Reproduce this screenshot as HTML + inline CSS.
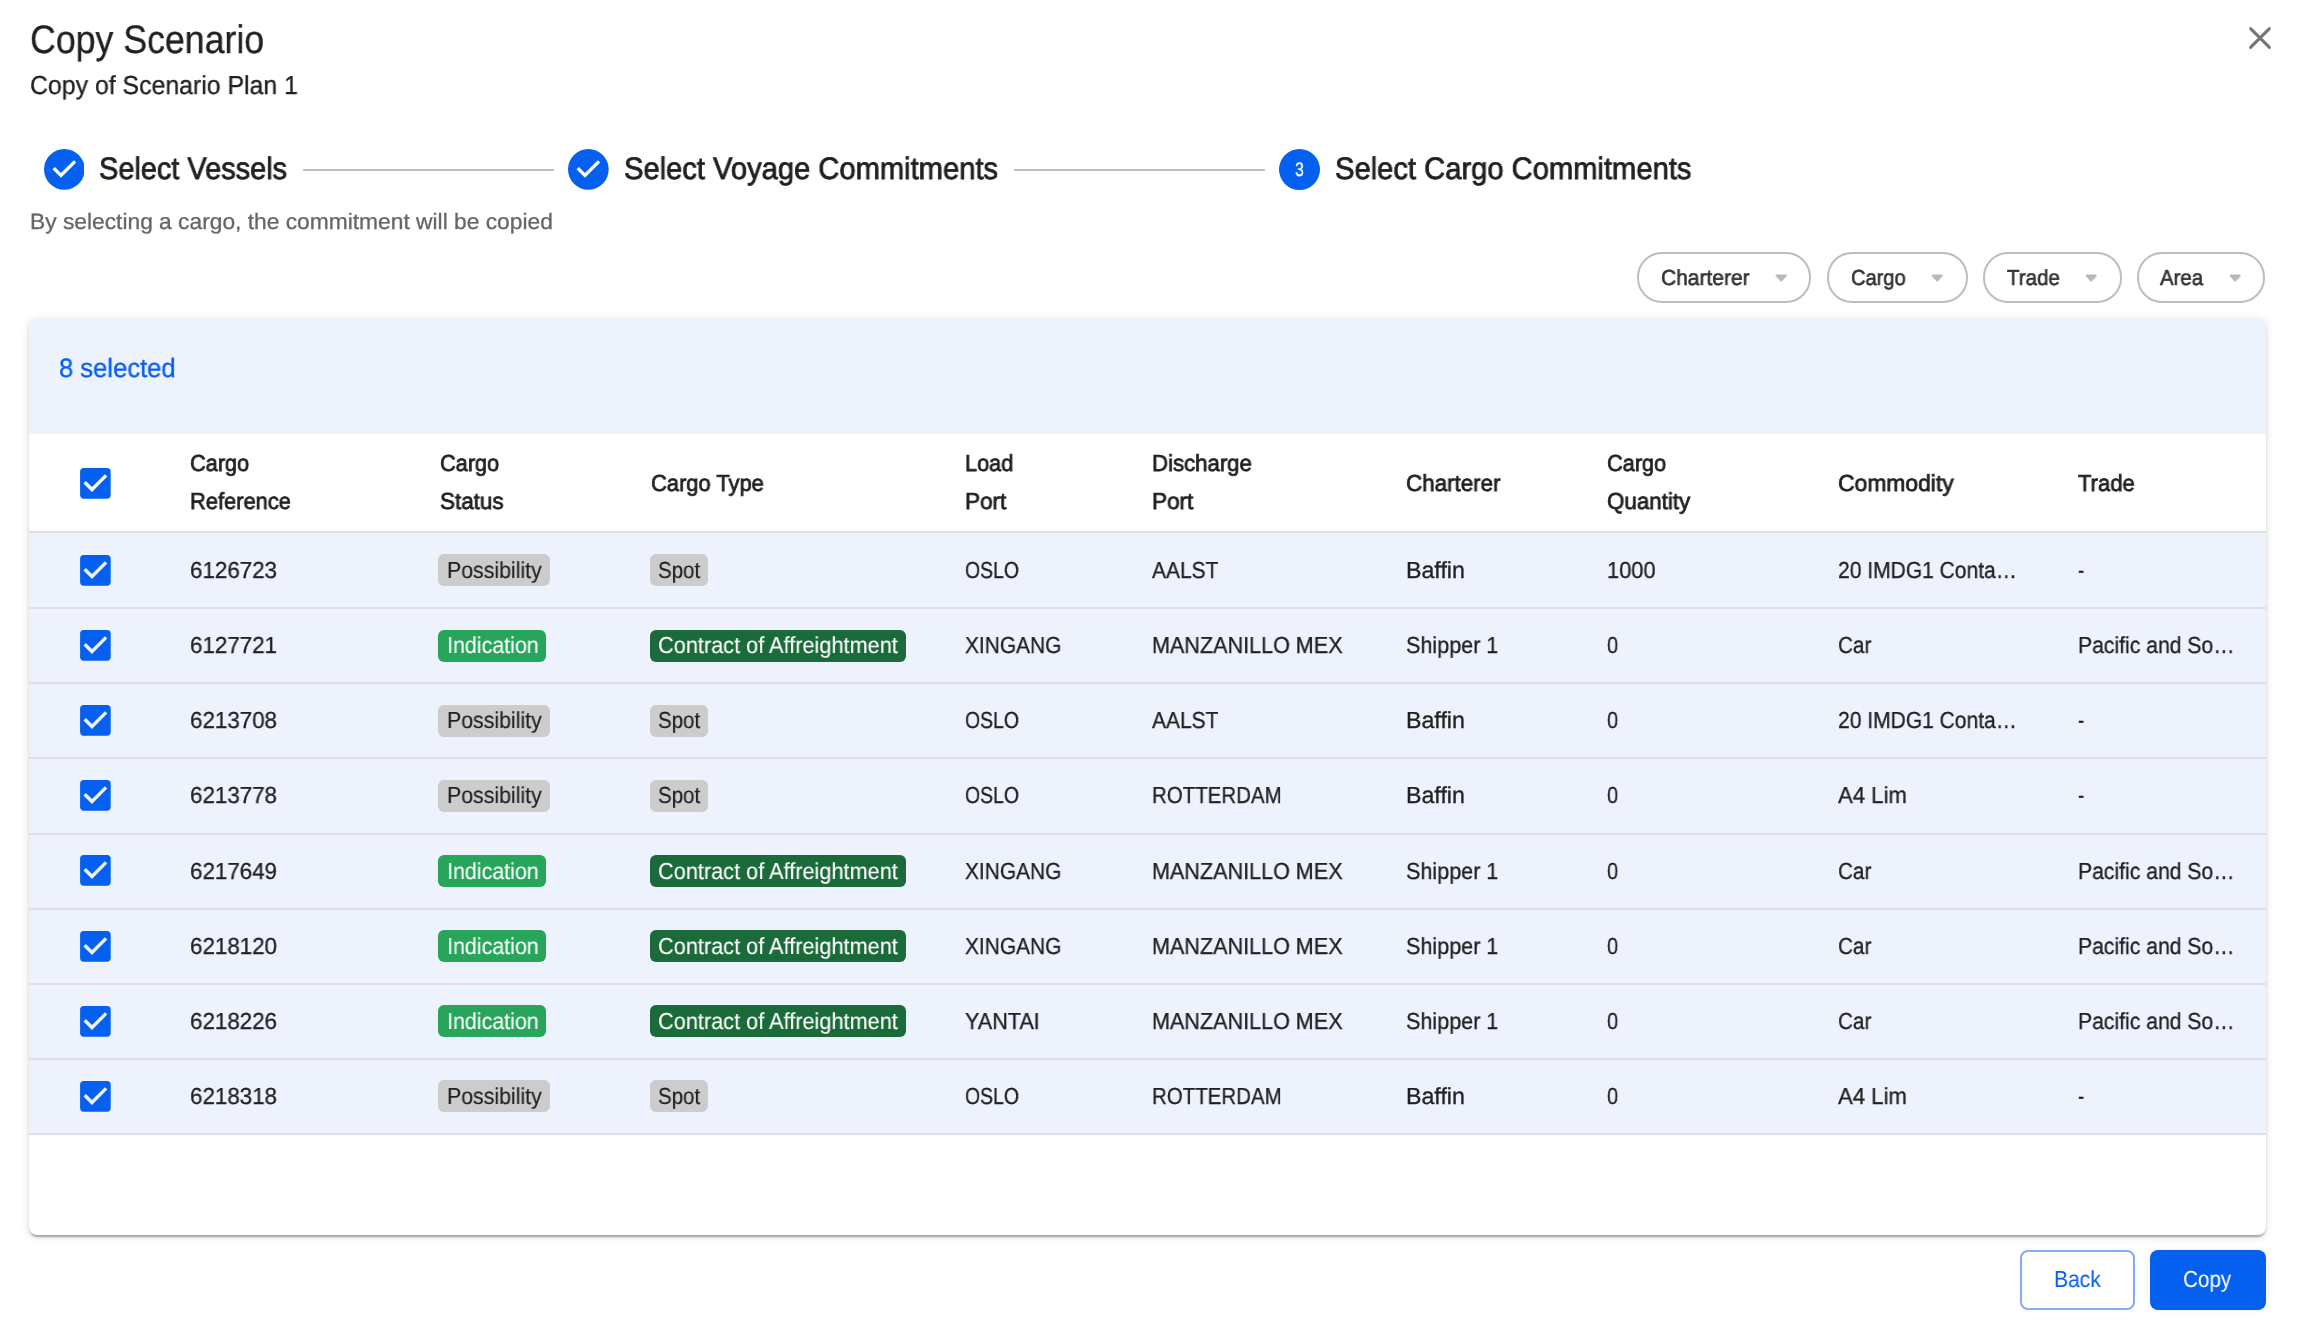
<!DOCTYPE html>
<html><head><meta charset="utf-8"><title>Copy Scenario</title>
<style>
html,body{margin:0;padding:0;background:#fff;width:2304px;height:1332px;overflow:hidden;position:relative}
body{font-family:"Liberation Sans",sans-serif;text-rendering:geometricPrecision}
.t{position:absolute;white-space:nowrap;line-height:1;transform-origin:0 0;will-change:transform}
</style></head><body>
<div class="t" style="left:29.80px;top:21px;font-size:39.70px;color:#212121;-webkit-text-stroke:0.30px #212121;transform:scaleX(0.8993);">Copy Scenario</div>
<div class="t" style="left:30.40px;top:72px;font-size:26.00px;color:#212121;-webkit-text-stroke:0.30px #212121;transform:scaleX(0.9554);">Copy of Scenario Plan 1</div>
<svg style="position:absolute;left:2244px;top:22.3px" width="32" height="32" viewBox="0 0 32 32"><path d="M6.6 6.6L25.4 25.4M25.4 6.6L6.6 25.4" stroke="#757575" stroke-width="3" stroke-linecap="round"/></svg>
<svg style="position:absolute;left:43.70px;top:148.90px" width="40.7" height="40.7" viewBox="0 0 24 24"><path fill="#0560f0" d="M12 0a12 12 0 1 0 0 24 12 12 0 0 0 0-24zm-2 17l-5-5 1.4-1.4 3.6 3.6 7.6-7.6L19 8l-9 9z"/></svg>
<svg style="position:absolute;left:568.25px;top:148.90px" width="40.7" height="40.7" viewBox="0 0 24 24"><path fill="#0560f0" d="M12 0a12 12 0 1 0 0 24 12 12 0 0 0 0-24zm-2 17l-5-5 1.4-1.4 3.6 3.6 7.6-7.6L19 8l-9 9z"/></svg>
<div style="position:absolute;left:1278.95px;top:148.75px;width:41.1px;height:41.1px;border-radius:50%;background:#0560f0"></div>
<div class="t" style="left:1295.10px;top:161px;font-size:19.50px;color:#fff;-webkit-text-stroke:0.30px #fff;transform:scaleX(0.8186);">3</div>
<div class="t" style="left:99.20px;top:153px;font-size:31.00px;color:#212121;-webkit-text-stroke:0.80px #212121;transform:scaleX(0.9330);">Select Vessels</div>
<div class="t" style="left:623.70px;top:153px;font-size:31.00px;color:#212121;-webkit-text-stroke:0.80px #212121;transform:scaleX(0.9397);">Select Voyage Commitments</div>
<div class="t" style="left:1334.50px;top:153px;font-size:31.00px;color:#212121;-webkit-text-stroke:0.80px #212121;transform:scaleX(0.9404);">Select Cargo Commitments</div>
<div style="position:absolute;left:303px;top:169px;width:251px;height:2px;background:#bdbdbd"></div>
<div style="position:absolute;left:1014px;top:169px;width:251px;height:2px;background:#bdbdbd"></div>
<div class="t" style="left:29.60px;top:211px;font-size:22.20px;color:#666666;-webkit-text-stroke:0.30px #666666;transform:scaleX(1.0265);">By selecting a cargo, the commitment will be copied</div>
<div style="position:absolute;left:1637px;top:252px;width:174px;height:51px;box-sizing:border-box;border:2px solid #bdbdbd;border-radius:25px"></div>
<div class="t" style="left:1661.40px;top:267px;font-size:21.80px;color:#333333;-webkit-text-stroke:0.60px #333333;transform:scaleX(0.9624);">Charterer</div>
<svg style="position:absolute;left:1774.6px;top:274.4px" width="13" height="9" viewBox="0 0 13 9"><path d="M1.6 1.5H10.8L6.2 6.6Z" fill="#b9b9b9" stroke="#b9b9b9" stroke-linejoin="round" stroke-width="2"/></svg>
<div style="position:absolute;left:1827px;top:252px;width:141px;height:51px;box-sizing:border-box;border:2px solid #bdbdbd;border-radius:25px"></div>
<div class="t" style="left:1851.00px;top:267px;font-size:21.80px;color:#333333;-webkit-text-stroke:0.60px #333333;transform:scaleX(0.9215);">Cargo</div>
<svg style="position:absolute;left:1930.9px;top:274.4px" width="13" height="9" viewBox="0 0 13 9"><path d="M1.6 1.5H10.8L6.2 6.6Z" fill="#b9b9b9" stroke="#b9b9b9" stroke-linejoin="round" stroke-width="2"/></svg>
<div style="position:absolute;left:1983px;top:252px;width:139px;height:51px;box-sizing:border-box;border:2px solid #bdbdbd;border-radius:25px"></div>
<div class="t" style="left:2007.00px;top:267px;font-size:21.80px;color:#333333;-webkit-text-stroke:0.60px #333333;transform:scaleX(0.9411);">Trade</div>
<svg style="position:absolute;left:2085.3px;top:274.4px" width="13" height="9" viewBox="0 0 13 9"><path d="M1.6 1.5H10.8L6.2 6.6Z" fill="#b9b9b9" stroke="#b9b9b9" stroke-linejoin="round" stroke-width="2"/></svg>
<div style="position:absolute;left:2137px;top:252px;width:128px;height:51px;box-sizing:border-box;border:2px solid #bdbdbd;border-radius:25px"></div>
<div class="t" style="left:2160.40px;top:267px;font-size:21.80px;color:#333333;-webkit-text-stroke:0.60px #333333;transform:scaleX(0.9348);">Area</div>
<svg style="position:absolute;left:2228.6px;top:274.4px" width="13" height="9" viewBox="0 0 13 9"><path d="M1.6 1.5H10.8L6.2 6.6Z" fill="#b9b9b9" stroke="#b9b9b9" stroke-linejoin="round" stroke-width="2"/></svg>
<div style="position:absolute;left:29px;top:318px;width:2237px;height:917px;border-radius:8px;background:#fff;box-shadow:0 4px 2px -2px rgba(0,0,0,0.2),0 2px 2px 0 rgba(0,0,0,0.14),0 2px 8px 0 rgba(0,0,0,0.13);overflow:hidden"><div style="position:absolute;left:0;top:0;width:100%;height:115.6px;background:#edf2fd"></div><div style="position:absolute;left:0;top:215px;width:100%;height:602px;background:#edf2fd"></div></div>
<div class="t" style="left:59.20px;top:355px;font-size:26.50px;color:#0560f0;-webkit-text-stroke:0.30px #0560f0;transform:scaleX(0.9656);">8 selected</div>
<div style="position:absolute;left:29px;top:531.4px;width:2237px;height:2px;background:#e0e0e0"></div>
<div style="position:absolute;left:29px;top:607.2px;width:2237px;height:2px;background:#e0e0e0"></div>
<div style="position:absolute;left:29px;top:682.3px;width:2237px;height:2px;background:#e0e0e0"></div>
<div style="position:absolute;left:29px;top:757.4px;width:2237px;height:2px;background:#e0e0e0"></div>
<div style="position:absolute;left:29px;top:832.5px;width:2237px;height:2px;background:#e0e0e0"></div>
<div style="position:absolute;left:29px;top:907.6px;width:2237px;height:2px;background:#e0e0e0"></div>
<div style="position:absolute;left:29px;top:982.7px;width:2237px;height:2px;background:#e0e0e0"></div>
<div style="position:absolute;left:29px;top:1057.8px;width:2237px;height:2px;background:#e0e0e0"></div>
<div style="position:absolute;left:29px;top:1132.9px;width:2237px;height:2px;background:#e0e0e0"></div>
<svg style="position:absolute;left:74.90px;top:462.60px" width="40.8" height="40.8" viewBox="0 0 24 24"><path fill="#0560f0" d="M19 3H5c-1.11 0-2 .9-2 2v14c0 1.1.89 2 2 2h14c1.11 0 2-.9 2-2V5c0-1.1-.89-2-2-2zm-9 14l-5-5 1.41-1.41L10 14.17l7.59-7.59L19 8l-9 9z"/></svg>
<div class="t" style="left:190.40px;top:452px;font-size:23.20px;color:#212121;-webkit-text-stroke:0.75px #212121;transform:scaleX(0.9360);">Cargo</div>
<div class="t" style="left:190.40px;top:490px;font-size:23.20px;color:#212121;-webkit-text-stroke:0.75px #212121;transform:scaleX(0.9436);">Reference</div>
<div class="t" style="left:439.50px;top:452px;font-size:23.20px;color:#212121;-webkit-text-stroke:0.75px #212121;transform:scaleX(0.9360);">Cargo</div>
<div class="t" style="left:439.50px;top:490px;font-size:23.20px;color:#212121;-webkit-text-stroke:0.75px #212121;transform:scaleX(0.9667);">Status</div>
<div class="t" style="left:651.20px;top:472px;font-size:23.20px;color:#212121;-webkit-text-stroke:0.75px #212121;transform:scaleX(0.9445);">Cargo Type</div>
<div class="t" style="left:965.30px;top:452px;font-size:23.20px;color:#212121;-webkit-text-stroke:0.75px #212121;transform:scaleX(0.9353);">Load</div>
<div class="t" style="left:965.30px;top:490px;font-size:23.20px;color:#212121;-webkit-text-stroke:0.75px #212121;transform:scaleX(0.9731);">Port</div>
<div class="t" style="left:1151.50px;top:452px;font-size:23.20px;color:#212121;-webkit-text-stroke:0.75px #212121;transform:scaleX(0.9566);">Discharge</div>
<div class="t" style="left:1151.50px;top:490px;font-size:23.20px;color:#212121;-webkit-text-stroke:0.75px #212121;transform:scaleX(0.9731);">Port</div>
<div class="t" style="left:1405.60px;top:472px;font-size:23.20px;color:#212121;-webkit-text-stroke:0.75px #212121;transform:scaleX(0.9649);">Charterer</div>
<div class="t" style="left:1607.30px;top:452px;font-size:23.20px;color:#212121;-webkit-text-stroke:0.75px #212121;transform:scaleX(0.9360);">Cargo</div>
<div class="t" style="left:1607.30px;top:490px;font-size:23.20px;color:#212121;-webkit-text-stroke:0.75px #212121;transform:scaleX(0.9637);">Quantity</div>
<div class="t" style="left:1838.30px;top:472px;font-size:23.20px;color:#212121;-webkit-text-stroke:0.75px #212121;transform:scaleX(0.9860);">Commodity</div>
<div class="t" style="left:2077.70px;top:472px;font-size:23.20px;color:#212121;-webkit-text-stroke:0.75px #212121;transform:scaleX(0.9506);">Trade</div>
<svg style="position:absolute;left:74.90px;top:549.65px" width="40.8" height="40.8" viewBox="0 0 24 24"><path fill="#0560f0" d="M19 3H5c-1.11 0-2 .9-2 2v14c0 1.1.89 2 2 2h14c1.11 0 2-.9 2-2V5c0-1.1-.89-2-2-2zm-9 14l-5-5 1.41-1.41L10 14.17l7.59-7.59L19 8l-9 9z"/></svg>
<div class="t" style="left:190.40px;top:559px;font-size:23.20px;color:#212121;-webkit-text-stroke:0.30px #212121;transform:scaleX(0.9646);">6126723</div>
<div style="position:absolute;left:438px;top:554.3px;width:112px;height:32px;border-radius:6px;background:#cccccc"></div>
<div class="t" style="left:446.80px;top:559px;font-size:23.20px;color:#212121;-webkit-text-stroke:0.15px #212121;transform:scaleX(0.9188);">Possibility</div>
<div style="position:absolute;left:650px;top:554.3px;width:58px;height:32px;border-radius:6px;background:#cccccc"></div>
<div class="t" style="left:657.80px;top:559px;font-size:23.20px;color:#212121;-webkit-text-stroke:0.15px #212121;transform:scaleX(0.8838);">Spot</div>
<div class="t" style="left:965.30px;top:559px;font-size:23.20px;color:#212121;-webkit-text-stroke:0.30px #212121;transform:scaleX(0.8372);">OSLO</div>
<div class="t" style="left:1151.50px;top:559px;font-size:23.20px;color:#212121;-webkit-text-stroke:0.30px #212121;transform:scaleX(0.9044);">AALST</div>
<div class="t" style="left:1405.60px;top:559px;font-size:23.20px;color:#212121;-webkit-text-stroke:0.30px #212121;transform:scaleX(0.9966);">Baffin</div>
<div class="t" style="left:1607.30px;top:559px;font-size:23.20px;color:#212121;-webkit-text-stroke:0.30px #212121;transform:scaleX(0.9411);">1000</div>
<div class="t" style="left:1838.30px;top:559px;font-size:23.20px;color:#212121;-webkit-text-stroke:0.30px #212121;transform:scaleX(0.9067);">20 IMDG1 Conta…</div>
<div class="t" style="left:2077.70px;top:559px;font-size:23.20px;color:#212121;-webkit-text-stroke:0.30px #212121;transform:scaleX(0.8000);">-</div>
<svg style="position:absolute;left:74.90px;top:625.10px" width="40.8" height="40.8" viewBox="0 0 24 24"><path fill="#0560f0" d="M19 3H5c-1.11 0-2 .9-2 2v14c0 1.1.89 2 2 2h14c1.11 0 2-.9 2-2V5c0-1.1-.89-2-2-2zm-9 14l-5-5 1.41-1.41L10 14.17l7.59-7.59L19 8l-9 9z"/></svg>
<div class="t" style="left:190.40px;top:634px;font-size:23.20px;color:#212121;-webkit-text-stroke:0.30px #212121;transform:scaleX(0.9646);">6127721</div>
<div style="position:absolute;left:438px;top:629.8px;width:108px;height:32px;border-radius:6px;background:#27a55a"></div>
<div class="t" style="left:446.80px;top:634px;font-size:23.20px;color:#ffffff;-webkit-text-stroke:0.10px #ffffff;transform:scaleX(0.9246);">Indication</div>
<div style="position:absolute;left:650px;top:629.8px;width:256px;height:32px;border-radius:6px;background:#1b6b3a"></div>
<div class="t" style="left:657.80px;top:634px;font-size:23.20px;color:#ffffff;-webkit-text-stroke:0.10px #ffffff;transform:scaleX(0.9367);">Contract of Affreightment</div>
<div class="t" style="left:965.30px;top:634px;font-size:23.20px;color:#212121;-webkit-text-stroke:0.30px #212121;transform:scaleX(0.8998);">XINGANG</div>
<div class="t" style="left:1151.50px;top:634px;font-size:23.20px;color:#212121;-webkit-text-stroke:0.30px #212121;transform:scaleX(0.9299);">MANZANILLO MEX</div>
<div class="t" style="left:1405.60px;top:634px;font-size:23.20px;color:#212121;-webkit-text-stroke:0.30px #212121;transform:scaleX(0.9307);">Shipper 1</div>
<div class="t" style="left:1607.30px;top:634px;font-size:23.20px;color:#212121;-webkit-text-stroke:0.30px #212121;transform:scaleX(0.8615);">0</div>
<div class="t" style="left:1838.30px;top:634px;font-size:23.20px;color:#212121;-webkit-text-stroke:0.30px #212121;transform:scaleX(0.8907);">Car</div>
<div class="t" style="left:2077.70px;top:634px;font-size:23.20px;color:#212121;-webkit-text-stroke:0.30px #212121;transform:scaleX(0.9128);">Pacific and So…</div>
<svg style="position:absolute;left:74.90px;top:700.20px" width="40.8" height="40.8" viewBox="0 0 24 24"><path fill="#0560f0" d="M19 3H5c-1.11 0-2 .9-2 2v14c0 1.1.89 2 2 2h14c1.11 0 2-.9 2-2V5c0-1.1-.89-2-2-2zm-9 14l-5-5 1.41-1.41L10 14.17l7.59-7.59L19 8l-9 9z"/></svg>
<div class="t" style="left:190.40px;top:709px;font-size:23.20px;color:#212121;-webkit-text-stroke:0.30px #212121;transform:scaleX(0.9646);">6213708</div>
<div style="position:absolute;left:438px;top:704.8px;width:112px;height:32px;border-radius:6px;background:#cccccc"></div>
<div class="t" style="left:446.80px;top:709px;font-size:23.20px;color:#212121;-webkit-text-stroke:0.15px #212121;transform:scaleX(0.9188);">Possibility</div>
<div style="position:absolute;left:650px;top:704.8px;width:58px;height:32px;border-radius:6px;background:#cccccc"></div>
<div class="t" style="left:657.80px;top:709px;font-size:23.20px;color:#212121;-webkit-text-stroke:0.15px #212121;transform:scaleX(0.8838);">Spot</div>
<div class="t" style="left:965.30px;top:709px;font-size:23.20px;color:#212121;-webkit-text-stroke:0.30px #212121;transform:scaleX(0.8372);">OSLO</div>
<div class="t" style="left:1151.50px;top:709px;font-size:23.20px;color:#212121;-webkit-text-stroke:0.30px #212121;transform:scaleX(0.9044);">AALST</div>
<div class="t" style="left:1405.60px;top:709px;font-size:23.20px;color:#212121;-webkit-text-stroke:0.30px #212121;transform:scaleX(0.9966);">Baffin</div>
<div class="t" style="left:1607.30px;top:709px;font-size:23.20px;color:#212121;-webkit-text-stroke:0.30px #212121;transform:scaleX(0.8615);">0</div>
<div class="t" style="left:1838.30px;top:709px;font-size:23.20px;color:#212121;-webkit-text-stroke:0.30px #212121;transform:scaleX(0.9067);">20 IMDG1 Conta…</div>
<div class="t" style="left:2077.70px;top:709px;font-size:23.20px;color:#212121;-webkit-text-stroke:0.30px #212121;transform:scaleX(0.8000);">-</div>
<svg style="position:absolute;left:74.90px;top:775.30px" width="40.8" height="40.8" viewBox="0 0 24 24"><path fill="#0560f0" d="M19 3H5c-1.11 0-2 .9-2 2v14c0 1.1.89 2 2 2h14c1.11 0 2-.9 2-2V5c0-1.1-.89-2-2-2zm-9 14l-5-5 1.41-1.41L10 14.17l7.59-7.59L19 8l-9 9z"/></svg>
<div class="t" style="left:190.40px;top:784px;font-size:23.20px;color:#212121;-webkit-text-stroke:0.30px #212121;transform:scaleX(0.9646);">6213778</div>
<div style="position:absolute;left:438px;top:780.0px;width:112px;height:32px;border-radius:6px;background:#cccccc"></div>
<div class="t" style="left:446.80px;top:784px;font-size:23.20px;color:#212121;-webkit-text-stroke:0.15px #212121;transform:scaleX(0.9188);">Possibility</div>
<div style="position:absolute;left:650px;top:780.0px;width:58px;height:32px;border-radius:6px;background:#cccccc"></div>
<div class="t" style="left:657.80px;top:784px;font-size:23.20px;color:#212121;-webkit-text-stroke:0.15px #212121;transform:scaleX(0.8838);">Spot</div>
<div class="t" style="left:965.30px;top:784px;font-size:23.20px;color:#212121;-webkit-text-stroke:0.30px #212121;transform:scaleX(0.8372);">OSLO</div>
<div class="t" style="left:1151.50px;top:784px;font-size:23.20px;color:#212121;-webkit-text-stroke:0.30px #212121;transform:scaleX(0.8835);">ROTTERDAM</div>
<div class="t" style="left:1405.60px;top:784px;font-size:23.20px;color:#212121;-webkit-text-stroke:0.30px #212121;transform:scaleX(0.9966);">Baffin</div>
<div class="t" style="left:1607.30px;top:784px;font-size:23.20px;color:#212121;-webkit-text-stroke:0.30px #212121;transform:scaleX(0.8615);">0</div>
<div class="t" style="left:1838.30px;top:784px;font-size:23.20px;color:#212121;-webkit-text-stroke:0.30px #212121;transform:scaleX(0.9550);">A4 Lim</div>
<div class="t" style="left:2077.70px;top:784px;font-size:23.20px;color:#212121;-webkit-text-stroke:0.30px #212121;transform:scaleX(0.8000);">-</div>
<svg style="position:absolute;left:74.90px;top:850.40px" width="40.8" height="40.8" viewBox="0 0 24 24"><path fill="#0560f0" d="M19 3H5c-1.11 0-2 .9-2 2v14c0 1.1.89 2 2 2h14c1.11 0 2-.9 2-2V5c0-1.1-.89-2-2-2zm-9 14l-5-5 1.41-1.41L10 14.17l7.59-7.59L19 8l-9 9z"/></svg>
<div class="t" style="left:190.40px;top:860px;font-size:23.20px;color:#212121;-webkit-text-stroke:0.30px #212121;transform:scaleX(0.9646);">6217649</div>
<div style="position:absolute;left:438px;top:855.0px;width:108px;height:32px;border-radius:6px;background:#27a55a"></div>
<div class="t" style="left:446.80px;top:860px;font-size:23.20px;color:#ffffff;-webkit-text-stroke:0.10px #ffffff;transform:scaleX(0.9246);">Indication</div>
<div style="position:absolute;left:650px;top:855.0px;width:256px;height:32px;border-radius:6px;background:#1b6b3a"></div>
<div class="t" style="left:657.80px;top:860px;font-size:23.20px;color:#ffffff;-webkit-text-stroke:0.10px #ffffff;transform:scaleX(0.9367);">Contract of Affreightment</div>
<div class="t" style="left:965.30px;top:860px;font-size:23.20px;color:#212121;-webkit-text-stroke:0.30px #212121;transform:scaleX(0.8998);">XINGANG</div>
<div class="t" style="left:1151.50px;top:860px;font-size:23.20px;color:#212121;-webkit-text-stroke:0.30px #212121;transform:scaleX(0.9299);">MANZANILLO MEX</div>
<div class="t" style="left:1405.60px;top:860px;font-size:23.20px;color:#212121;-webkit-text-stroke:0.30px #212121;transform:scaleX(0.9307);">Shipper 1</div>
<div class="t" style="left:1607.30px;top:860px;font-size:23.20px;color:#212121;-webkit-text-stroke:0.30px #212121;transform:scaleX(0.8615);">0</div>
<div class="t" style="left:1838.30px;top:860px;font-size:23.20px;color:#212121;-webkit-text-stroke:0.30px #212121;transform:scaleX(0.8907);">Car</div>
<div class="t" style="left:2077.70px;top:860px;font-size:23.20px;color:#212121;-webkit-text-stroke:0.30px #212121;transform:scaleX(0.9128);">Pacific and So…</div>
<svg style="position:absolute;left:74.90px;top:925.50px" width="40.8" height="40.8" viewBox="0 0 24 24"><path fill="#0560f0" d="M19 3H5c-1.11 0-2 .9-2 2v14c0 1.1.89 2 2 2h14c1.11 0 2-.9 2-2V5c0-1.1-.89-2-2-2zm-9 14l-5-5 1.41-1.41L10 14.17l7.59-7.59L19 8l-9 9z"/></svg>
<div class="t" style="left:190.40px;top:935px;font-size:23.20px;color:#212121;-webkit-text-stroke:0.30px #212121;transform:scaleX(0.9646);">6218120</div>
<div style="position:absolute;left:438px;top:930.2px;width:108px;height:32px;border-radius:6px;background:#27a55a"></div>
<div class="t" style="left:446.80px;top:935px;font-size:23.20px;color:#ffffff;-webkit-text-stroke:0.10px #ffffff;transform:scaleX(0.9246);">Indication</div>
<div style="position:absolute;left:650px;top:930.2px;width:256px;height:32px;border-radius:6px;background:#1b6b3a"></div>
<div class="t" style="left:657.80px;top:935px;font-size:23.20px;color:#ffffff;-webkit-text-stroke:0.10px #ffffff;transform:scaleX(0.9367);">Contract of Affreightment</div>
<div class="t" style="left:965.30px;top:935px;font-size:23.20px;color:#212121;-webkit-text-stroke:0.30px #212121;transform:scaleX(0.8998);">XINGANG</div>
<div class="t" style="left:1151.50px;top:935px;font-size:23.20px;color:#212121;-webkit-text-stroke:0.30px #212121;transform:scaleX(0.9299);">MANZANILLO MEX</div>
<div class="t" style="left:1405.60px;top:935px;font-size:23.20px;color:#212121;-webkit-text-stroke:0.30px #212121;transform:scaleX(0.9307);">Shipper 1</div>
<div class="t" style="left:1607.30px;top:935px;font-size:23.20px;color:#212121;-webkit-text-stroke:0.30px #212121;transform:scaleX(0.8615);">0</div>
<div class="t" style="left:1838.30px;top:935px;font-size:23.20px;color:#212121;-webkit-text-stroke:0.30px #212121;transform:scaleX(0.8907);">Car</div>
<div class="t" style="left:2077.70px;top:935px;font-size:23.20px;color:#212121;-webkit-text-stroke:0.30px #212121;transform:scaleX(0.9128);">Pacific and So…</div>
<svg style="position:absolute;left:74.90px;top:1000.60px" width="40.8" height="40.8" viewBox="0 0 24 24"><path fill="#0560f0" d="M19 3H5c-1.11 0-2 .9-2 2v14c0 1.1.89 2 2 2h14c1.11 0 2-.9 2-2V5c0-1.1-.89-2-2-2zm-9 14l-5-5 1.41-1.41L10 14.17l7.59-7.59L19 8l-9 9z"/></svg>
<div class="t" style="left:190.40px;top:1010px;font-size:23.20px;color:#212121;-webkit-text-stroke:0.30px #212121;transform:scaleX(0.9646);">6218226</div>
<div style="position:absolute;left:438px;top:1005.2px;width:108px;height:32px;border-radius:6px;background:#27a55a"></div>
<div class="t" style="left:446.80px;top:1010px;font-size:23.20px;color:#ffffff;-webkit-text-stroke:0.10px #ffffff;transform:scaleX(0.9246);">Indication</div>
<div style="position:absolute;left:650px;top:1005.2px;width:256px;height:32px;border-radius:6px;background:#1b6b3a"></div>
<div class="t" style="left:657.80px;top:1010px;font-size:23.20px;color:#ffffff;-webkit-text-stroke:0.10px #ffffff;transform:scaleX(0.9367);">Contract of Affreightment</div>
<div class="t" style="left:965.30px;top:1010px;font-size:23.20px;color:#212121;-webkit-text-stroke:0.30px #212121;transform:scaleX(0.9304);">YANTAI</div>
<div class="t" style="left:1151.50px;top:1010px;font-size:23.20px;color:#212121;-webkit-text-stroke:0.30px #212121;transform:scaleX(0.9299);">MANZANILLO MEX</div>
<div class="t" style="left:1405.60px;top:1010px;font-size:23.20px;color:#212121;-webkit-text-stroke:0.30px #212121;transform:scaleX(0.9307);">Shipper 1</div>
<div class="t" style="left:1607.30px;top:1010px;font-size:23.20px;color:#212121;-webkit-text-stroke:0.30px #212121;transform:scaleX(0.8615);">0</div>
<div class="t" style="left:1838.30px;top:1010px;font-size:23.20px;color:#212121;-webkit-text-stroke:0.30px #212121;transform:scaleX(0.8907);">Car</div>
<div class="t" style="left:2077.70px;top:1010px;font-size:23.20px;color:#212121;-webkit-text-stroke:0.30px #212121;transform:scaleX(0.9128);">Pacific and So…</div>
<svg style="position:absolute;left:74.90px;top:1075.70px" width="40.8" height="40.8" viewBox="0 0 24 24"><path fill="#0560f0" d="M19 3H5c-1.11 0-2 .9-2 2v14c0 1.1.89 2 2 2h14c1.11 0 2-.9 2-2V5c0-1.1-.89-2-2-2zm-9 14l-5-5 1.41-1.41L10 14.17l7.59-7.59L19 8l-9 9z"/></svg>
<div class="t" style="left:190.40px;top:1085px;font-size:23.20px;color:#212121;-webkit-text-stroke:0.30px #212121;transform:scaleX(0.9646);">6218318</div>
<div style="position:absolute;left:438px;top:1080.3px;width:112px;height:32px;border-radius:6px;background:#cccccc"></div>
<div class="t" style="left:446.80px;top:1085px;font-size:23.20px;color:#212121;-webkit-text-stroke:0.15px #212121;transform:scaleX(0.9188);">Possibility</div>
<div style="position:absolute;left:650px;top:1080.3px;width:58px;height:32px;border-radius:6px;background:#cccccc"></div>
<div class="t" style="left:657.80px;top:1085px;font-size:23.20px;color:#212121;-webkit-text-stroke:0.15px #212121;transform:scaleX(0.8838);">Spot</div>
<div class="t" style="left:965.30px;top:1085px;font-size:23.20px;color:#212121;-webkit-text-stroke:0.30px #212121;transform:scaleX(0.8372);">OSLO</div>
<div class="t" style="left:1151.50px;top:1085px;font-size:23.20px;color:#212121;-webkit-text-stroke:0.30px #212121;transform:scaleX(0.8835);">ROTTERDAM</div>
<div class="t" style="left:1405.60px;top:1085px;font-size:23.20px;color:#212121;-webkit-text-stroke:0.30px #212121;transform:scaleX(0.9966);">Baffin</div>
<div class="t" style="left:1607.30px;top:1085px;font-size:23.20px;color:#212121;-webkit-text-stroke:0.30px #212121;transform:scaleX(0.8615);">0</div>
<div class="t" style="left:1838.30px;top:1085px;font-size:23.20px;color:#212121;-webkit-text-stroke:0.30px #212121;transform:scaleX(0.9550);">A4 Lim</div>
<div class="t" style="left:2077.70px;top:1085px;font-size:23.20px;color:#212121;-webkit-text-stroke:0.30px #212121;transform:scaleX(0.8000);">-</div>
<div style="position:absolute;left:2019.5px;top:1250px;width:115.5px;height:60px;box-sizing:border-box;border:2px solid #82acf7;border-radius:8px"></div>
<div class="t" style="left:2053.60px;top:1268px;font-size:23.20px;color:#0560f0;-webkit-text-stroke:0.05px #0560f0;transform:scaleX(0.9082);">Back</div>
<div style="position:absolute;left:2150px;top:1250px;width:116px;height:60px;border-radius:8px;background:#0560f0;box-shadow:0 0 6px 0 rgba(0,0,0,0.06)"></div>
<div class="t" style="left:2183.20px;top:1268px;font-size:23.20px;color:#ffffff;-webkit-text-stroke:0.05px #ffffff;transform:scaleX(0.8899);">Copy</div>
</body></html>
